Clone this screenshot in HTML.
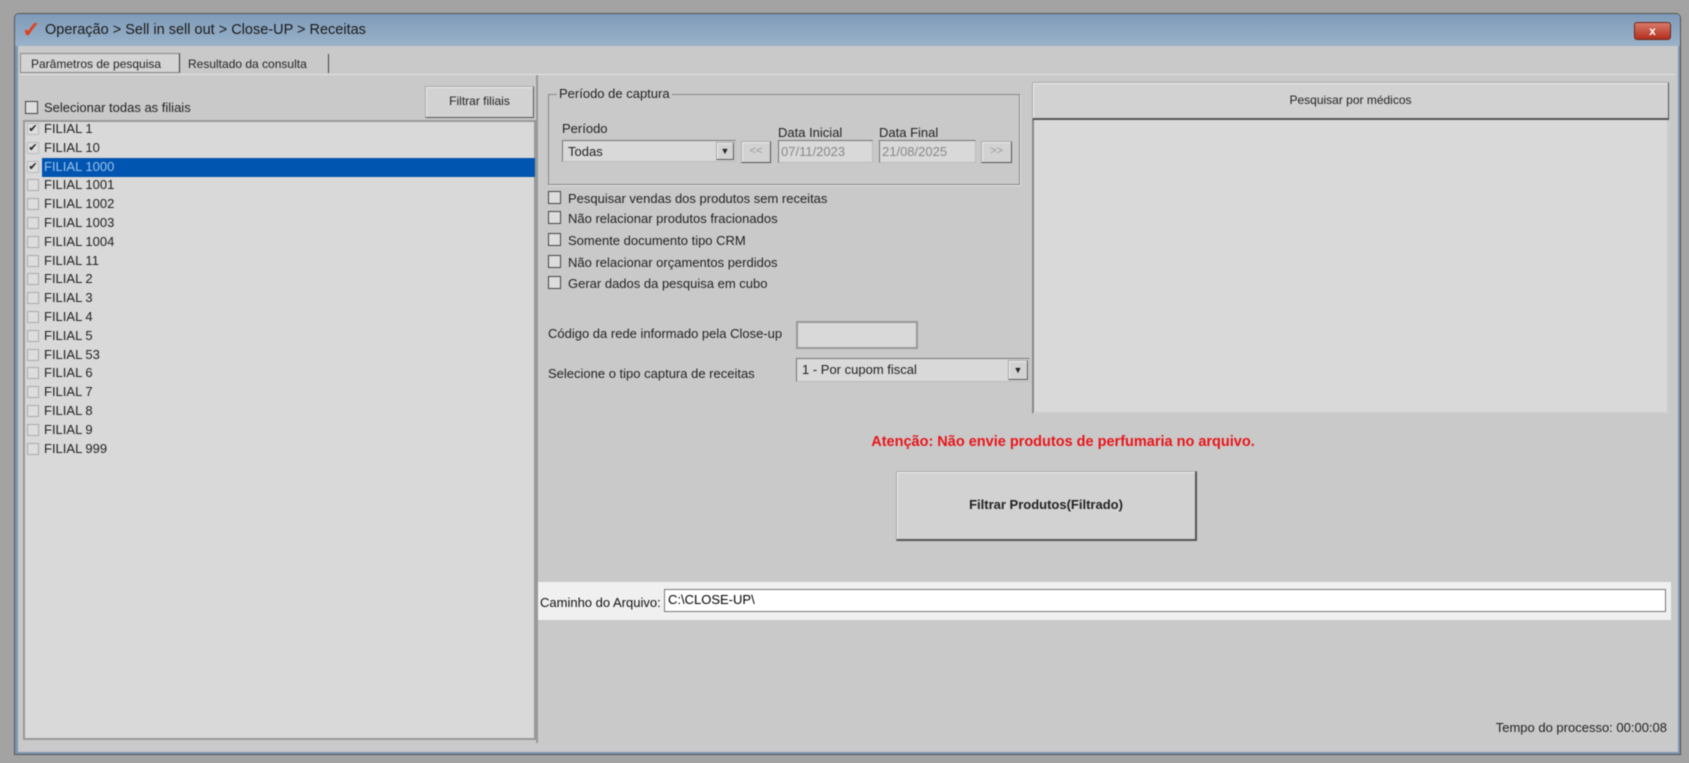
<!DOCTYPE html>
<html><head><meta charset="utf-8"><style>
*{box-sizing:border-box;margin:0;padding:0}
body{width:1689px;height:763px;background:#a3a3a3;font-family:"Liberation Sans",sans-serif;font-size:13px;color:#222;position:relative;overflow:hidden;filter:blur(0.5px)}
.a{position:absolute}
.win{left:14px;top:13px;width:1667px;height:742px;background:#c9c9c9;border:1px solid #555;border-radius:5px 5px 0 0;box-shadow:inset 0 0 0 3px #7d97b3}
.title{left:15px;top:14px;width:1665px;height:32px;background:linear-gradient(#7f9bb8,#9ab2ca);border-radius:4px 4px 0 0}
.chk{width:13px;height:13px;border:1px solid #444;background:#ddd}
.lchk{width:12px;height:12px;border:1px solid #aaa;background:#ddd}
.btn{background:#d2d2d2;border:1px solid #aaa;border-right-color:#555;border-bottom-color:#555;box-shadow:inset 1px 1px #eee;text-align:center}
.inp{background:#d9d9d9;border:1px solid #777;border-right-color:#bbb;border-bottom-color:#bbb}
</style></head><body>
<div class="a win"></div>
<div class="a title"></div>
<div class="a" style="left:22px;top:19px;color:#e0401c;font-size:22px;font-weight:bold;line-height:22px">✓</div>
<div class="a" style="left:45px;top:22px;font-size:14.5px;color:#1a1a1a">Operação &gt; Sell in sell out &gt; Close-UP &gt; Receitas</div>
<div class="a" style="left:1634px;top:22px;width:37px;height:18px;background:linear-gradient(#d77a6a,#b52e1c);border:1px solid #6a2a20;border-radius:3px;color:#fff;text-align:center;font-size:12px;font-weight:bold;line-height:16px">x</div>
<div class="a" style="left:18px;top:46px;width:1660px;height:706px;background:#c9c9c9"></div>
<div class="a" style="left:20px;top:53px;width:160px;height:20px;border:1px solid #888;border-right-color:#333;background:#d4d4d4;font-size:12px;padding:3px 0 0 10px">Parâmetros de pesquisa</div>
<div class="a" style="left:181px;top:54px;width:148px;height:19px;border-right:1px solid #444;font-size:12px;padding:3px 0 0 7px">Resultado da consulta</div>
<div class="a" style="left:20px;top:74px;width:1655px;height:1px;background:#e2e2e2"></div>
<div class="a chk" style="left:25px;top:101px"></div>
<div class="a" style="left:44px;top:100px">Selecionar todas as filiais</div>
<div class="a btn" style="left:425px;top:86px;width:109px;height:32px;font-size:12px;line-height:29px">Filtrar filiais</div>
<div class="a" style="left:23px;top:120px;width:513px;height:620px;background:#d9d9d9;border:2px solid #999"></div>
<div class="a" style="left:42px;top:158px;width:493px;height:19px;background:#0055b0"></div>
<div id="L"></div>
<script>
var n=["1","10","1000","1001","1002","1003","1004","11","2","3","4","5","53","6","7","8","9","999"],h="";
for(var i=0;i<n.length;i++){var y=119+i*18.8;var c=i<3;
h+='<div class="a lchk" style="left:27px;top:'+(y+4)+'px;'+(c?'border-color:#bbb;font-size:11px;line-height:10px;text-align:center':'')+'">'+(c?'✔':'')+'</div>';
h+='<div class="a" style="left:44px;top:'+(y+2)+'px;'+(i==2?'color:#9cc3f0':'')+'">FILIAL '+n[i]+'</div>';}
document.getElementById("L").innerHTML=h;
</script>
<div class="a" style="left:548px;top:94px;width:472px;height:91px;border:1px solid #888;box-shadow:1px 1px #e5e5e5"></div>
<div class="a" style="left:557px;top:86px;background:#c9c9c9;padding:0 2px">Período de captura</div>
<div class="a" style="left:562px;top:121px">Período</div>
<div class="a inp" style="left:562px;top:140px;width:174px;height:22px;padding:3px 5px">Todas</div>
<div class="a btn" style="left:716px;top:142px;width:18px;height:18px;font-size:9px;line-height:16px">▼</div>
<div class="a btn" style="left:741px;top:141px;width:30px;height:22px;color:#999;font-size:11px;line-height:19px">&lt;&lt;</div>
<div class="a" style="left:778px;top:125px">Data Inicial</div>
<div class="a inp" style="left:778px;top:140px;width:95px;height:23px;color:#888;padding:3px 2px">07/11/2023</div>
<div class="a" style="left:879px;top:125px">Data Final</div>
<div class="a inp" style="left:879px;top:140px;width:97px;height:23px;color:#888;padding:3px 2px">21/08/2025</div>
<div class="a btn" style="left:981px;top:141px;width:31px;height:22px;color:#999;font-size:11px;line-height:19px">&gt;&gt;</div>
<div class="a chk" style="left:548px;top:191px"></div><div class="a" style="left:568px;top:191px">Pesquisar vendas dos produtos sem receitas</div>
<div class="a chk" style="left:548px;top:211px"></div><div class="a" style="left:568px;top:211px">Não relacionar produtos fracionados</div>
<div class="a chk" style="left:548px;top:233px"></div><div class="a" style="left:568px;top:233px">Somente documento tipo CRM</div>
<div class="a chk" style="left:548px;top:255px"></div><div class="a" style="left:568px;top:255px">Não relacionar orçamentos perdidos</div>
<div class="a chk" style="left:548px;top:276px"></div><div class="a" style="left:568px;top:276px">Gerar dados da pesquisa em cubo</div>
<div class="a" style="left:548px;top:326px">Código da rede informado pela Close-up</div>
<div class="a inp" style="left:796px;top:321px;width:122px;height:28px;border:2px solid #999"></div>
<div class="a" style="left:548px;top:366px">Selecione o tipo captura de receitas</div>
<div class="a inp" style="left:796px;top:358px;width:234px;height:24px;padding:3px 5px">1 - Por cupom fiscal</div>
<div class="a btn" style="left:1008px;top:360px;width:20px;height:20px;font-size:9px;line-height:18px">▼</div>
<div class="a btn" style="left:1032px;top:82px;width:637px;height:38px;line-height:35px;font-size:12px;border-bottom:2px solid #555">Pesquisar por médicos</div>
<div class="a" style="left:1032px;top:120px;width:637px;height:294px;background:#d9d9d9;border:2px solid #888;border-top:none;border-right-color:#ccc;border-bottom-color:#ccc"></div>
<div class="a" style="left:600px;top:434px;width:926px;text-align:center;color:#e8151b;font-weight:bold;font-size:14.5px">Atenção: Não envie produtos de perfumaria no arquivo.</div>
<div class="a btn" style="left:896px;top:471px;width:301px;height:70px;line-height:66px;font-weight:bold;font-size:13px;border-right:2px solid #555;border-bottom:2px solid #555">Filtrar Produtos(Filtrado)</div>
<div class="a" style="left:537px;top:582px;width:1134px;height:38px;background:#f0f0f0"></div>
<div class="a" style="left:540px;top:595px;font-size:13px;color:#111">Caminho do Arquivo:</div>
<div class="a" style="left:664px;top:589px;width:1002px;height:23px;background:#fff;border:1px solid #777;padding:2px 3px;color:#000">C:\CLOSE-UP\</div>
<div class="a" style="left:536px;top:75px;width:2px;height:668px;background:#999"></div>
<div class="a" style="left:1400px;top:720px;width:267px;text-align:right;font-size:13px">Tempo do processo: 00:00:08</div>
</body></html>
